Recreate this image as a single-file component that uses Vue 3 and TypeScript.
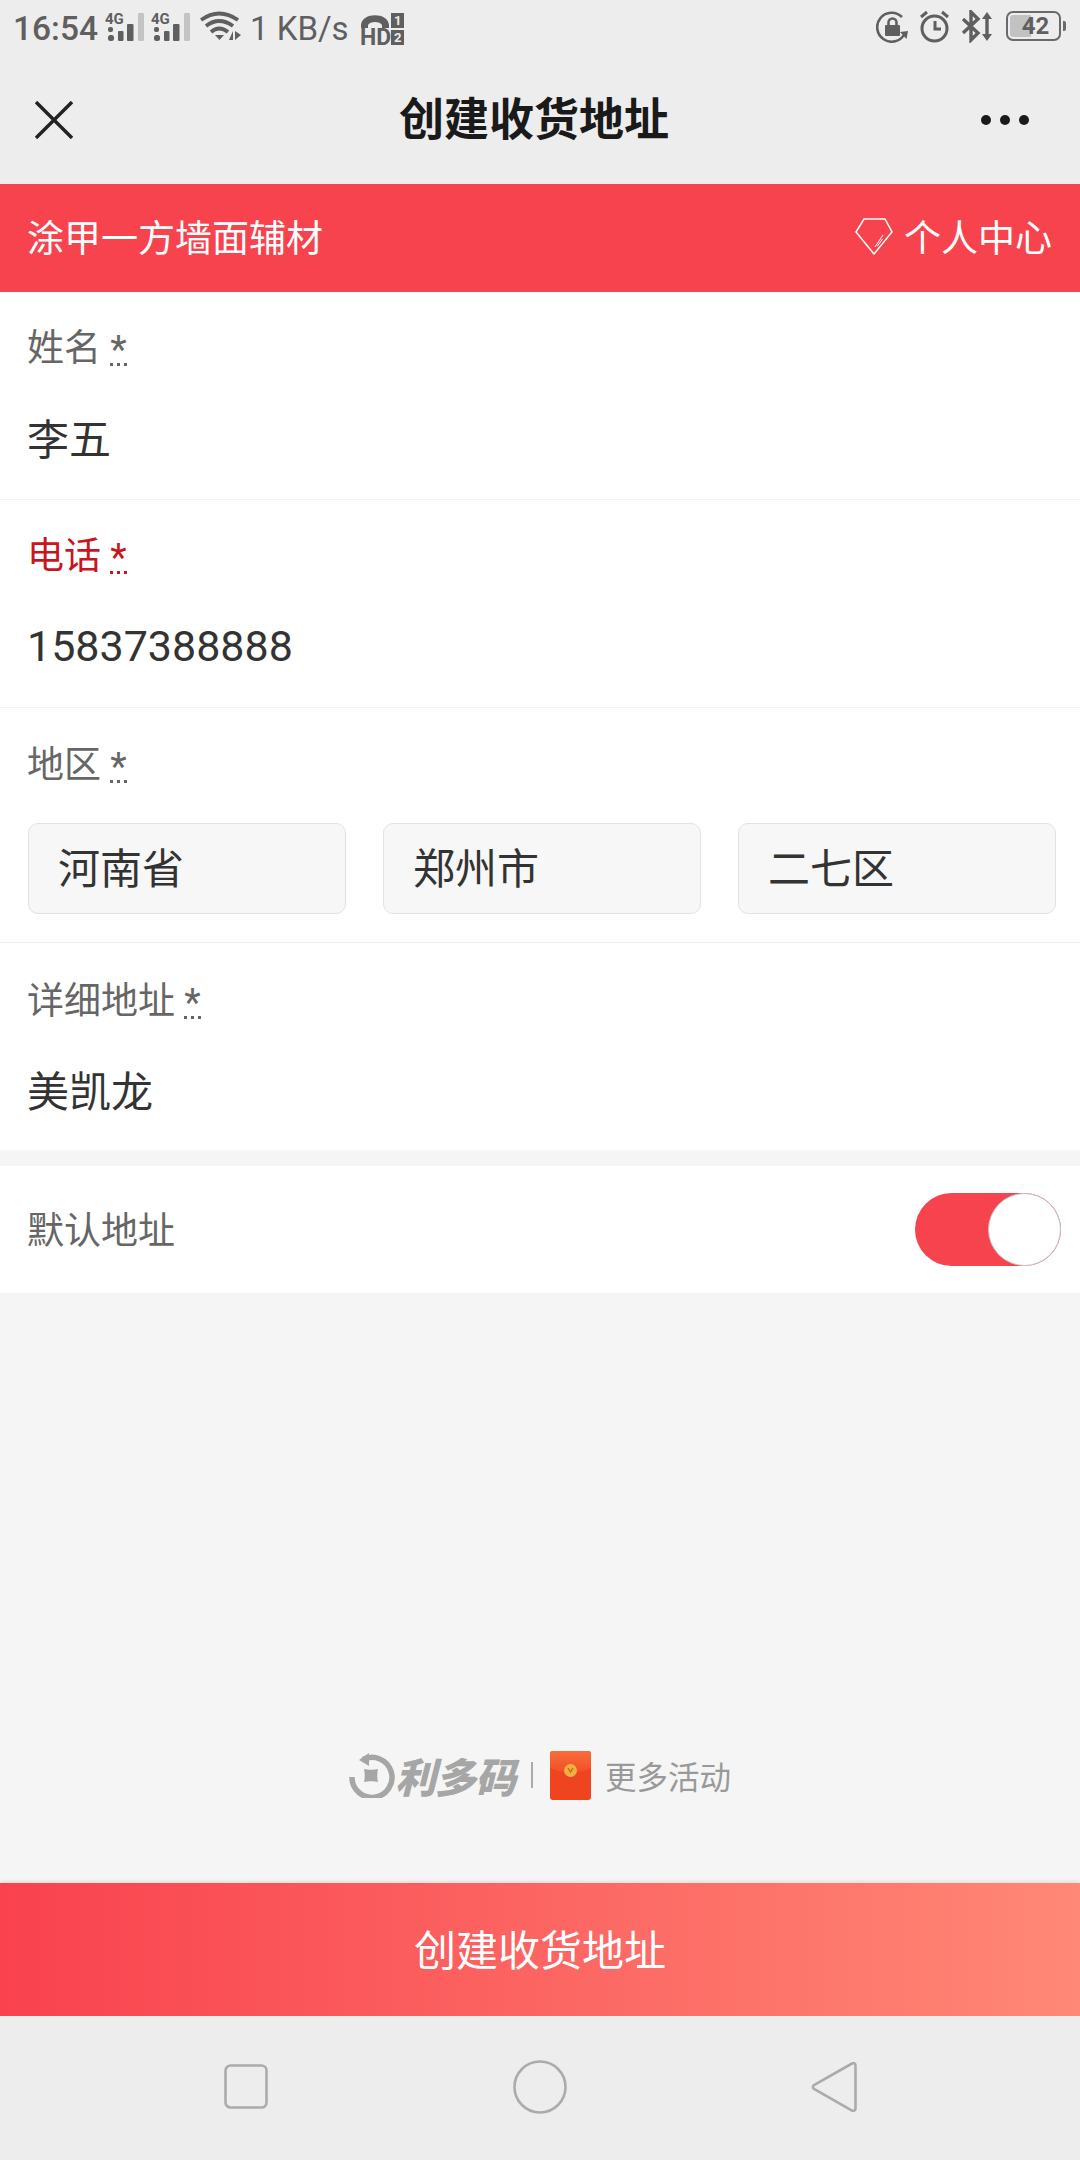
<script setup lang="ts">
import { ref } from 'vue';

const regions = ['河南省', '郑州市', '二七区'];
const isDefault = ref(true);
</script>

<template>
  <div class="page">
    <header class="top">
      <div class="status">
        <div class="status-left">
          <span class="time">16:54</span>
          <svg v-for="n in 2" :key="n" class="sig" width="40" height="34" viewBox="0 0 40 34">
            <text x="0" y="14" class="sig-text">4G</text>
            <rect x="3" y="17" width="5" height="5" rx="2" fill="#5f5f5f" />
            <rect x="3" y="25" width="6" height="6" rx="2.500" fill="#5f5f5f" />
            <rect x="13" y="21" width="5.500" height="10" rx="1" fill="#5f5f5f" />
            <rect x="22" y="14" width="6.500" height="17" rx="1" fill="#5f5f5f" />
            <rect x="33" y="3" width="6" height="28" rx="1" fill="#c4c4c4" />
          </svg>
          <svg class="wifi" width="44" height="34" viewBox="0 0 44 34" fill="none" stroke="#5f5f5f" stroke-width="3.800">
            <path d="M1 10Q19-3 38 10" />
            <path d="M6 16Q19 6 33 16" />
            <path d="M11 22Q19 15 28 22" />
            <path d="M15 25h9l-4.500 5z" fill="#5f5f5f" stroke="none" />
            <path d="M29 30l4-9v9zM35 21v9l6-5z" fill="#5f5f5f" stroke="none" />
          </svg>
          <span class="speed">1 KB/s</span>
          <svg class="hd" width="45" height="40" viewBox="0 0 45 40">
            <path d="M1 14C2 1 28 1 29 14v3h-7v-3c-2-4-12-4-14 0v3H1z" fill="#5f5f5f" />
            <text x="0" y="34" class="hd-text">HD</text>
            <rect x="31" y="2" width="13" height="15" fill="#5f5f5f" />
            <rect x="31" y="19" width="13" height="15" fill="#5f5f5f" />
            <text x="34" y="14" class="hd-num">1</text>
            <text x="34" y="31" class="hd-num">2</text>
          </svg>
        </div>
        <div class="status-right">
          <svg width="32" height="33" viewBox="0 0 32 33" fill="none" stroke="#5f5f5f" stroke-width="2.600">
            <path d="M26 7A14.500 14.500 0 1 0 28.500 24" />
            <path d="M24 22l8-1-1.500 8z" fill="#5f5f5f" stroke="none" />
            <rect x="9" y="15" width="15" height="11" rx="1" fill="#5f5f5f" stroke="none" />
            <path d="M12.500 15v-2.500a4 4 0 0 1 8 0V15" />
          </svg>
          <svg width="29" height="33" viewBox="0 0 29 33" fill="none" stroke="#5f5f5f" stroke-width="3">
            <circle cx="14.500" cy="18.500" r="12.500" />
            <path d="M15 11v8h6" />
            <path d="M1 7l6-5M28 7l-6-5" />
          </svg>
          <svg width="33" height="33" viewBox="0 0 33 33" fill="none" stroke="#5f5f5f" stroke-width="3.400">
            <path d="M2 9l15 14-7 7V2l7 7L2 23" />
            <path d="M26 5v23" />
            <path d="M21 9l5-7 5 7zM21 24l5 7 5-7z" fill="#5f5f5f" stroke="none" />
          </svg>
          <div class="battery">
            <div class="battery-box">
              <div class="battery-fill"></div>
              <span class="battery-num">42</span>
            </div>
            <div class="battery-tip"></div>
          </div>
        </div>
      </div>

      <nav class="navbar">
        <svg class="close" width="38" height="38" viewBox="0 0 38 38" stroke="#222" stroke-width="3.400" fill="none">
          <path d="M1 1l36 36M37 1L1 37" />
        </svg>
        <h1 class="nav-title">创建收货地址</h1>
        <div class="more">
          <i></i><i></i><i></i>
        </div>
      </nav>
    </header>

    <div class="banner">
      <span>涂甲一方墙面辅材</span>
      <span class="center-link">
        <svg width="38" height="37" viewBox="0 0 38 37" fill="none" stroke="#fff" stroke-width="1.500">
          <path d="M9 1h21l7 13-18 22L1 14z" />
          <path d="M20 29l8-12M22.500 28l5-7" stroke-width="1" />
        </svg>
        个人中心
      </span>
    </div>

    <form class="form" @submit.prevent>
      <div class="field">
        <label class="label">姓名 <abbr class="req">*</abbr></label>
        <div class="value">李五</div>
      </div>
      <div class="field">
        <label class="label label-error">电话 <abbr class="req">*</abbr></label>
        <div class="value phone">15837388888</div>
      </div>
      <div class="field field-region">
        <label class="label">地区 <abbr class="req">*</abbr></label>
        <div class="selects">
          <div v-for="r in regions" :key="r" class="select">{{ r }}</div>
        </div>
      </div>
      <div class="field field-last">
        <label class="label">详细地址 <abbr class="req">*</abbr></label>
        <div class="value">美凯龙</div>
      </div>
    </form>

    <div class="default-row">
      <span>默认地址</span>
      <div class="toggle" :class="{ on: isDefault }" @click="isDefault = !isDefault">
        <div class="knob"></div>
      </div>
    </div>

    <div class="spacer"></div>

    <div class="brand">
      <svg class="brand-logo" width="46" height="46" viewBox="0 0 46 46" fill="none">
        <path d="M14 7.500A20 20 0 1 1 3 25" stroke="#a6a6a6" stroke-width="5.500" />
        <path d="M10 8l10-7v13z" fill="#a6a6a6" />
        <path d="M15 17c4 1 10 1 14 0-1 4-1 9 0 13-4-1-10-1-14 0 1-4 1-9 0-13z" fill="#a6a6a6" />
      </svg>
      <span class="brand-name">利多码</span>
      <span class="brand-sep"></span>
      <svg class="packet" width="41" height="49" viewBox="0 0 41 49">
        <defs>
          <linearGradient id="packetTop" x1="0" y1="0" x2="0" y2="1">
            <stop offset="0" stop-color="#f76d3a" />
            <stop offset="1" stop-color="#f34e28" />
          </linearGradient>
        </defs>
        <rect width="41" height="49" rx="3" fill="#ee4420" />
        <path d="M0 3a3 3 0 0 1 3-3h35a3 3 0 0 1 3 3v14c-12 6-29 6-41 0z" fill="url(#packetTop)" />
        <circle cx="20.500" cy="19.500" r="6.500" fill="#f0b040" />
        <path d="M18 17l2.500 4 2.500-4" stroke="#c9652a" stroke-width="1.400" fill="none" />
      </svg>
      <span class="brand-more">更多活动</span>
    </div>

    <button class="submit" type="button">创建收货地址</button>

    <footer class="sysnav">
      <svg width="44" height="45" viewBox="0 0 44 45" fill="none" stroke="#ababab" stroke-width="2.600">
        <rect x="1.500" y="1.500" width="41" height="42" rx="5" />
      </svg>
      <svg width="54" height="54" viewBox="0 0 54 54" fill="none" stroke="#ababab" stroke-width="2.600">
        <circle cx="27" cy="27" r="25.500" />
      </svg>
      <svg width="46" height="52" viewBox="0 0 46 52" fill="none" stroke="#ababab" stroke-width="2.600">
        <path d="M41 2.500c2-1 3.500 0 3.500 2v43c0 2-2 3-3.500 2L3 28c-1.500-1-1.500-3 0-4z" />
      </svg>
    </footer>
  </div>
</template>

<style scoped>
.page {
  width: 1080px;
  height: 2160px;
  display: flex;
  flex-direction: column;
  background: #f5f5f5;
  font-family: Roboto, "Noto Sans CJK SC", sans-serif;
  overflow: hidden;
}
.top { background: #ededed; height: 184px; flex: none; }
.status {
  height: 62px;
  display: flex;
  justify-content: space-between;
  align-items: center;
  padding: 0 14px 6px 13px;
  box-sizing: border-box;
  color: #5f5f5f;
}
.status-left, .status-right { display: flex; align-items: center; }
.status-right { gap: 12px; padding-bottom: 4px; }
.time { font-size: 33.500px; font-weight: 500; width: 92px; }
.sig { margin-right: 6px; margin-top: -2px; }
.sig-text { font: 700 15px Roboto, sans-serif; fill: #5f5f5f; }
.wifi { margin: -2px 6px 0 3px; }
.speed { font-size: 33px; width: 110px; }
.hd { margin-top: 5px; }
.hd-text { font: 700 23px Roboto, sans-serif; fill: #5f5f5f; }
.hd-num { font: 700 13px Roboto, sans-serif; fill: #ededed; }
.battery { display: flex; align-items: center; gap: 2px; }
.battery-box {
  width: 55px;
  height: 30px;
  border: 2px solid #6a6a6a;
  border-radius: 7px;
  box-sizing: border-box;
  display: flex;
  align-items: center;
  justify-content: center;
  overflow: hidden;
  position: relative;
  padding-left: 4px;
}
.battery-fill {
  position: absolute;
  left: 2px;
  top: 2px;
  bottom: 2px;
  width: 21px;
  background: #c2c2c2;
  border-radius: 3px 0 0 3px;
}
.battery-num { position: relative; font-size: 24px; font-weight: 700; color: #5f5f5f; }
.battery-tip { width: 3px; height: 10px; background: #6a6a6a; border-radius: 0 2px 2px 0; }

.navbar {
  height: 122px;
  display: flex;
  align-items: center;
  justify-content: space-between;
  padding: 0 51px 6px 35px;
  box-sizing: border-box;
}
.nav-title {
  margin: 0 0 0 14px;
  font-size: 45px;
  font-weight: 700;
  color: #1a1a1a;
  line-height: 1;
}
.more { display: flex; gap: 9px; width: 48px; }
.more i { width: 10px; height: 10px; border-radius: 50%; background: #1a1a1a; }

.banner {
  height: 108px;
  flex: none;
  box-sizing: border-box;
  background: #f6434d;
  color: #fff;
  display: flex;
  align-items: center;
  justify-content: space-between;
  padding: 0 28px 4px 27px;
  font-size: 37px;
}
.center-link { display: flex; align-items: center; gap: 11px; }

.form { background: #fff; flex: none; }
.field {
  padding: 32px 24px 33px 27px;
  border-bottom: 1px solid #f2f2f2;
}
.field-region { padding-top: 33px; padding-bottom: 28px; }
.field-last { border-bottom: none; padding-top: 34px; padding-bottom: 32px; }
.label {
  display: block;
  font-size: 37px;
  line-height: 50px;
  color: #666;
}
.label-error { color: #c9151e; }
.req {
  display: inline-block;
  line-height: 30px;
  height: 28px;
  border-bottom: 3px dotted currentColor;
  vertical-align: -2px;
  font-size: 38px;
}
.value {
  margin-top: 42px;
  font-size: 42px;
  line-height: 50px;
  color: #333;
}
.field-last .value { margin-top: 41px; }
.phone { margin-top: 39px; margin-bottom: 3px; font-size: 43px; }
.selects {
  margin-top: 32px;
  margin-left: 1px;
  display: grid;
  grid-template-columns: repeat(3, 318px);
  gap: 37px;
}
.select {
  height: 91px;
  box-sizing: border-box;
  border: 1.500px solid #e2e2e2;
  border-radius: 10px;
  background: #f7f7f7;
  display: flex;
  align-items: center;
  padding: 0 0 6px 29px;
  font-size: 42px;
  color: #333;
}

.default-row {
  margin-top: 16px;
  height: 127px;
  flex: none;
  box-sizing: border-box;
  background: #fff;
  display: flex;
  align-items: center;
  justify-content: space-between;
  padding: 0 19px 0 27px;
  font-size: 37px;
  color: #666;
}
.default-row span { margin-bottom: 4px; }
.toggle {
  width: 146px;
  height: 73px;
  border-radius: 37px;
  background: #dcdcdc;
  display: flex;
}
.toggle.on { background: #f6434d; justify-content: flex-end; }
.knob {
  width: 73px;
  height: 73px;
  box-sizing: border-box;
  border-radius: 50%;
  background: #fff;
  border: 1.500px solid #c4c4c4;
}

.spacer { flex: 1; }
.brand {
  flex: none;
  display: flex;
  align-items: center;
  padding-left: 349px;
  height: 50px;
  margin-bottom: 83px;
}
.brand-name {
  font-size: 41px;
  font-weight: 900;
  font-style: italic;
  color: #a6a6a6;
  letter-spacing: -1px;
}
.brand-sep { width: 2px; height: 26px; background: #aaa; margin: 0 17px 0 16px; }
.brand-more { margin-left: 14px; font-size: 31.500px; color: #999; }

.submit {
  flex: none;
  height: 133px;
  border: none;
  padding: 0 0 4px;
  background: linear-gradient(90deg, #f9424e, #ff8876);
  box-shadow: 0 -2px 3px rgba(0, 0, 0, 0.08);
  color: #fff;
  font-family: inherit;
  font-size: 42px;
}
.sysnav {
  flex: none;
  height: 144px;
  background: #ededed;
  display: flex;
  align-items: center;
  padding: 0 0 3px 224px;
  box-sizing: border-box;
}
.sysnav svg:nth-child(1) { margin-right: 245px; }
.sysnav svg:nth-child(2) { margin-right: 244px; }
</style>

<style>
html, body { margin: 0; padding: 0; }
</style>
